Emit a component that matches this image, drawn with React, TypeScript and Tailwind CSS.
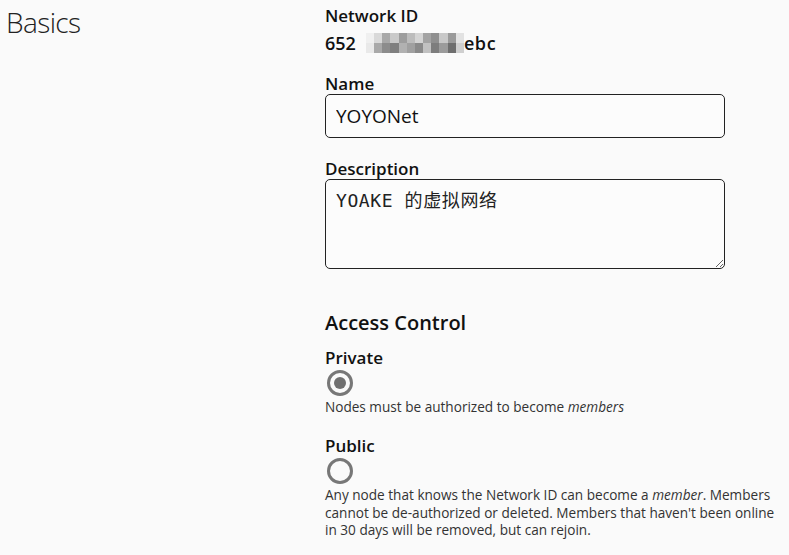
import React from "react";

const blur = [
  ["#f0f0f0", "#d9d9d9", "#a8a8a8", "#c9c9c9", "#9d9d9d", "#bcbcbc", "#d4d4d4", "#a3a3a3", "#8f8f8f", "#c8c8c8", "#9a9a9a", "#e2e2e2"],
  ["#e9e9e9", "#a9a9a9", "#8c8c8c", "#7f7f7f", "#b1b1b1", "#a0a0a0", "#8a8a8a", "#c1c1c1", "#7d7d7d", "#9b9b9b", "#6e6e6e", "#cfcfcf"],
];

export default function App() {
  return (
    <div
      className="min-h-[555px] w-[789px] bg-[#fafafa] text-[#111] flex"
      style={{ fontFamily: '"Open Sans", "Noto Sans CJK SC", sans-serif' }}
    >
      <div className="w-[325px] shrink-0 pl-[6px] pt-[2px]">
        <h2 className="text-[28px] font-light leading-[40px] tracking-[-0.6px] text-[#222]">Basics</h2>
      </div>
      <div className="w-[400px] pt-[4px]">
        <div className="text-[17px] font-semibold leading-[24px]">Network ID</div>
        <div className="mt-[2px] text-[18px] font-semibold leading-[26px] flex items-center">
          <span>652</span>
          <span className="ml-[10px] grid grid-cols-12 w-[98px] h-[20px]">
            {blur.flat().map((c, i) => (
              <span key={i} style={{ backgroundColor: c }} />
            ))}
          </span>
          <span className="tracking-[0.6px]">ebc</span>
        </div>

        <div className="mt-[17px] text-[17px] font-semibold leading-[22px]">Name</div>
        <input
          className="-mt-[1px] w-[400px] h-[44px] rounded-[5px] border-[1.5px] border-[#222] bg-[#fcfcfc] px-[10px] text-[19px] text-[#111] outline-none"
          defaultValue="YOYONet"
        />

        <div className="mt-[20px] text-[17px] font-semibold leading-[22px]">Description</div>
        <textarea
          className="-mt-[1px] block w-[400px] h-[90px] rounded-[5px] border-[1.5px] border-[#222] bg-[#fcfcfc] px-[10px] py-[10px] text-[18px] leading-[22px] tracking-[0.6px] text-[#222] outline-none"
          style={{ fontFamily: '"DejaVu Sans Mono", "Noto Sans CJK SC", monospace' }}
          defaultValue="YOAKE 的虚拟网络"
        />

        <div className="mt-[40px] text-[20px] font-semibold leading-[28px]">Access Control</div>

        <div className="mt-[10px] text-[17px] font-semibold leading-[22px]">Private</div>
        <div className="mt-[1px] ml-[2px] w-[26px] h-[26px] rounded-full border-[3px] border-[#777] flex items-center justify-center">
          <div className="w-[12px] h-[12px] rounded-full bg-[#707070]" />
        </div>
        <p className="mt-[2px] text-[13.6px] leading-[18px] text-[#333]">
          Nodes must be authorized to become <em>members</em>
        </p>

        <div className="mt-[19px] text-[17px] font-semibold leading-[22px]">Public</div>
        <div className="mt-[1px] ml-[2px] w-[26px] h-[26px] rounded-full border-[3px] border-[#777]" />
        <p className="mt-[2px] text-[13.6px] leading-[17.5px] text-[#333] w-[456px]">
          Any node that knows the Network ID can become a <em>member</em>. Members cannot be de-authorized or deleted. Members that haven't been online in 30 days will be removed, but can rejoin.
        </p>
      </div>
    </div>
  );
}
